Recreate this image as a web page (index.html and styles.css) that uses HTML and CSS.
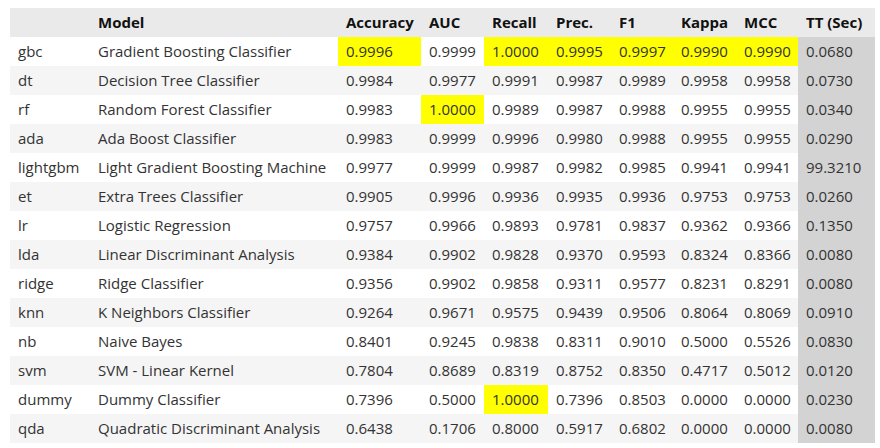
FILE: index.html
```html
<!DOCTYPE html>
<html>
<head>
<meta charset="utf-8">
<link rel="stylesheet" href="styles.css">
</head>
<body>
<table class="grid">
  <colgroup>
    <col class="c-idx"><col class="c-model"><col class="c-acc"><col class="c-auc"><col class="c-rec"><col class="c-prec"><col class="c-f1"><col class="c-kappa"><col class="c-mcc"><col class="c-tt">
  </colgroup>
  <thead>
    <tr><th></th><th>Model</th><th>Accuracy</th><th>AUC</th><th>Recall</th><th>Prec.</th><th>F1</th><th>Kappa</th><th>MCC</th><th>TT (Sec)</th></tr>
  </thead>
  <tbody>
    <tr><th>gbc</th><td>Gradient Boosting Classifier</td><td class="hi">0.9996</td><td>0.9999</td><td class="hi">1.0000</td><td class="hi">0.9995</td><td class="hi">0.9997</td><td class="hi">0.9990</td><td class="hi">0.9990</td><td class="tt">0.0680</td></tr>
    <tr><th>dt</th><td>Decision Tree Classifier</td><td>0.9984</td><td>0.9977</td><td>0.9991</td><td>0.9987</td><td>0.9989</td><td>0.9958</td><td>0.9958</td><td class="tt">0.0730</td></tr>
    <tr><th>rf</th><td>Random Forest Classifier</td><td>0.9983</td><td class="hi">1.0000</td><td>0.9989</td><td>0.9987</td><td>0.9988</td><td>0.9955</td><td>0.9955</td><td class="tt">0.0340</td></tr>
    <tr><th>ada</th><td>Ada Boost Classifier</td><td>0.9983</td><td>0.9999</td><td>0.9996</td><td>0.9980</td><td>0.9988</td><td>0.9955</td><td>0.9955</td><td class="tt">0.0290</td></tr>
    <tr><th>lightgbm</th><td>Light Gradient Boosting Machine</td><td>0.9977</td><td>0.9999</td><td>0.9987</td><td>0.9982</td><td>0.9985</td><td>0.9941</td><td>0.9941</td><td class="tt">99.3210</td></tr>
    <tr><th>et</th><td>Extra Trees Classifier</td><td>0.9905</td><td>0.9996</td><td>0.9936</td><td>0.9935</td><td>0.9936</td><td>0.9753</td><td>0.9753</td><td class="tt">0.0260</td></tr>
    <tr><th>lr</th><td>Logistic Regression</td><td>0.9757</td><td>0.9966</td><td>0.9893</td><td>0.9781</td><td>0.9837</td><td>0.9362</td><td>0.9366</td><td class="tt">0.1350</td></tr>
    <tr><th>lda</th><td>Linear Discriminant Analysis</td><td>0.9384</td><td>0.9902</td><td>0.9828</td><td>0.9370</td><td>0.9593</td><td>0.8324</td><td>0.8366</td><td class="tt">0.0080</td></tr>
    <tr><th>ridge</th><td>Ridge Classifier</td><td>0.9356</td><td>0.9902</td><td>0.9858</td><td>0.9311</td><td>0.9577</td><td>0.8231</td><td>0.8291</td><td class="tt">0.0080</td></tr>
    <tr><th>knn</th><td>K Neighbors Classifier</td><td>0.9264</td><td>0.9671</td><td>0.9575</td><td>0.9439</td><td>0.9506</td><td>0.8064</td><td>0.8069</td><td class="tt">0.0910</td></tr>
    <tr><th>nb</th><td>Naive Bayes</td><td>0.8401</td><td>0.9245</td><td>0.9838</td><td>0.8311</td><td>0.9010</td><td>0.5000</td><td>0.5526</td><td class="tt">0.0830</td></tr>
    <tr><th>svm</th><td>SVM - Linear Kernel</td><td>0.7804</td><td>0.8689</td><td>0.8319</td><td>0.8752</td><td>0.8350</td><td>0.4717</td><td>0.5012</td><td class="tt">0.0120</td></tr>
    <tr><th>dummy</th><td>Dummy Classifier</td><td>0.7396</td><td>0.5000</td><td class="hi">1.0000</td><td>0.7396</td><td>0.8503</td><td>0.0000</td><td>0.0000</td><td class="tt">0.0230</td></tr>
    <tr><th>qda</th><td>Quadratic Discriminant Analysis</td><td>0.6438</td><td>0.1706</td><td>0.8000</td><td>0.5917</td><td>0.6802</td><td>0.0000</td><td>0.0000</td><td class="tt">0.0080</td></tr>
  </tbody>
</table>
</body>
</html>
```
FILE: styles.css
```css
html, body {
  background: #ffffff;
}
body {
  margin: 0;
  padding: 8px 0 0 10px;
  font-family: "Open Sans", "Noto Sans", sans-serif;
  font-size: 15px;
  color: #333333;
}
.grid {
  border-collapse: collapse;
  border-spacing: 0;
  table-layout: fixed;
  width: 865px;
}
.c-idx { width: 80px; }
.c-model { width: 248px; }
.c-acc { width: 83px; }
.c-auc { width: 63px; }
.c-rec { width: 64px; }
.c-prec { width: 63px; }
.c-f1 { width: 62px; }
.c-kappa { width: 63px; }
.c-mcc { width: 62px; }
.c-tt { width: 77px; }
.grid th, .grid td {
  height: 29px;
  padding: 0 0 1px 8px;
  text-align: left;
  vertical-align: middle;
  white-space: nowrap;
  overflow: hidden;
  box-sizing: border-box;
  line-height: 20px;
}
.grid thead th {
  background: #eaeaea;
  font-weight: 700;
  color: #111111;
}
.grid tbody th {
  font-weight: 400;
}
.grid tbody tr:nth-child(even) {
  background: #f5f5f5;
}
.grid td.hi {
  background: #ffff00;
}
.grid td.tt {
  background: #d3d3d3;
}
```
